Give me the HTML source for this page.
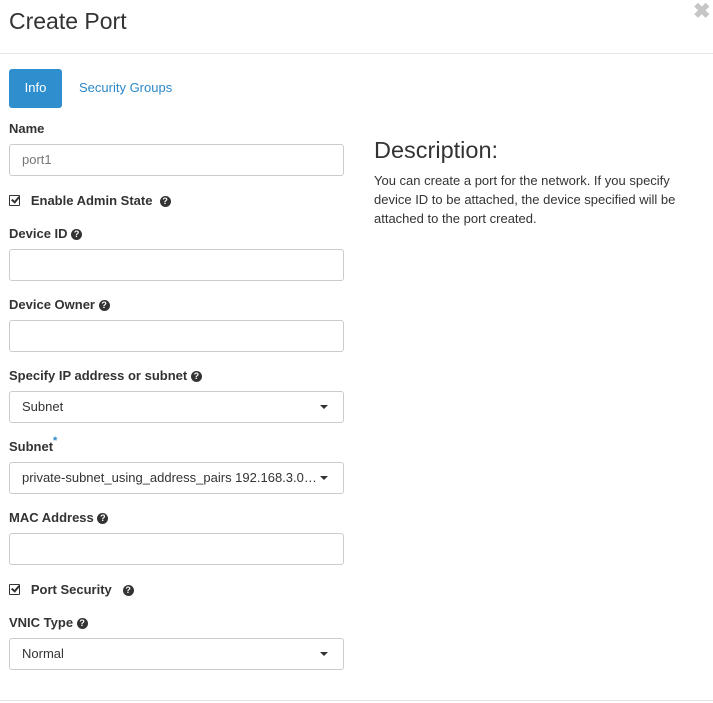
<!DOCTYPE html>
<html><head><style>
*{margin:0;padding:0;box-sizing:border-box}
body{width:713px;height:703px;background:#fff;font-family:"Liberation Sans",sans-serif;color:#333;position:relative;overflow:hidden}
.a{position:absolute;white-space:nowrap}
.lbl{font-size:13px;font-weight:bold;line-height:16px}
.inp{position:absolute;left:9px;width:335px;height:32px;border:1px solid #ccc;border-radius:3px;font-size:13px;color:#333;padding-left:12px;line-height:30px}
.caret{position:absolute;right:15px;top:13px;width:0;height:0;border-left:4px solid transparent;border-right:4px solid transparent;border-top:4px solid #333}
.q{display:inline-block;width:11px;height:11px;border-radius:50%;background:#333;color:#fff;font-size:9px;line-height:11px;text-align:center;vertical-align:1px;font-weight:bold}
.hr{position:absolute;left:0;width:713px;height:1px;background:#e5e5e5}
.cb{display:inline-block;width:11px;height:11px;border:1.5px solid #333;border-radius:1px;position:relative;vertical-align:-1px}
.cb:after{content:"";position:absolute;left:2.5px;top:-1px;width:3px;height:6px;border-right:2px solid #333;border-bottom:2px solid #333;transform:rotate(40deg)}
</style></head><body>
<div class="a" style="left:9px;top:6px;font-size:23px;line-height:30px">Create Port</div>
<div class="a" style="left:693px;top:0px;font-size:21px;font-weight:bold;color:#c6c6c6;line-height:24px">✖</div>
<div class="hr" style="top:53px"></div>
<div class="a" style="left:9px;top:69px;width:53px;height:39px;background:#2e8ece;border-radius:3px;color:#fff;font-size:13px;line-height:38px;text-align:center">Info</div>
<div class="a" style="left:79px;top:80px;font-size:13px;color:#2b88c8;line-height:16px">Security Groups</div>

<div class="a lbl" style="left:9px;top:121px">Name</div>
<div class="inp" style="top:144px;color:#777">port1</div>
<div class="a lbl" style="left:9px;top:193px"><span class="cb"></span>&nbsp;&nbsp; Enable Admin State &nbsp;<span class="q">?</span></div>
<div class="a lbl" style="left:9px;top:226px">Device ID <span class="q">?</span></div>
<div class="inp" style="top:249px"></div>
<div class="a lbl" style="left:9px;top:297px">Device Owner <span class="q">?</span></div>
<div class="inp" style="top:320px"></div>
<div class="a lbl" style="left:9px;top:368px">Specify IP address or subnet <span class="q">?</span></div>
<div class="inp" style="top:391px">Subnet<div class="caret"></div></div>
<div class="a lbl" style="left:9px;top:439px">Subnet</div>
<div class="a" style="left:53px;top:435px;color:#2b88c8;font-size:11px;font-weight:bold">*</div>
<div class="inp" style="top:462px">private-subnet_using_address_pairs 192.168.3.0…<div class="caret"></div></div>
<div class="a lbl" style="left:9px;top:510px">MAC Address <span class="q">?</span></div>
<div class="inp" style="top:533px"></div>
<div class="a lbl" style="left:9px;top:582px"><span class="cb"></span>&nbsp;&nbsp; Port Security &nbsp;&nbsp;<span class="q">?</span></div>
<div class="a lbl" style="left:9px;top:615px">VNIC Type <span class="q">?</span></div>
<div class="inp" style="top:638px">Normal<div class="caret"></div></div>
<div class="hr" style="top:700px"></div>

<div class="a" style="left:374px;top:135px;font-size:23.5px;line-height:30px">Description:</div>
<div class="a" style="left:374px;top:171px;font-size:13px;line-height:19px;white-space:normal;width:320px">You can create a port for the network. If you specify device ID to be attached, the device specified will be attached to the port created.</div>
</body></html>
